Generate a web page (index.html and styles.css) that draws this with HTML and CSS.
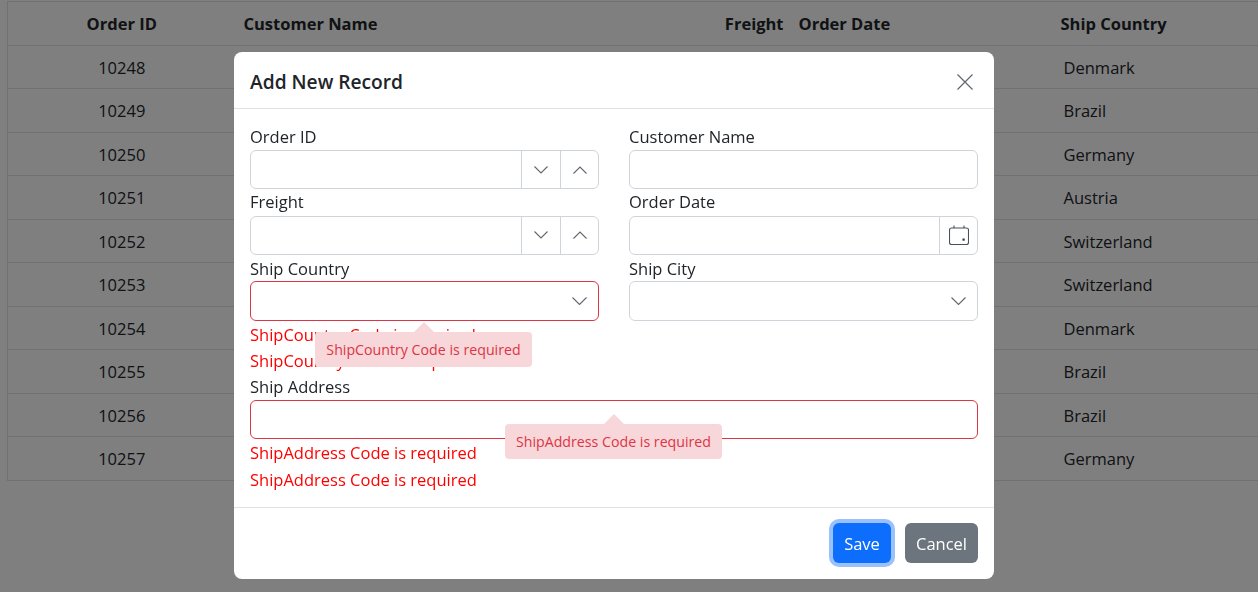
FILE: index.html
```html
<!DOCTYPE html>
<html lang="en">
<head>
    <meta charset="UTF-8">
    <meta name="viewport" content="width=device-width, initial-scale=1.0">
    <title>Add New Record</title>
    <link rel="stylesheet" href="styles.css">
</head>
<body>
    <table class="grid">
        <colgroup>
            <col class="col-id">
            <col class="col-name">
            <col class="col-freight">
            <col class="col-date">
            <col>
        </colgroup>
        <thead>
            <tr>
                <th class="center">Order ID</th>
                <th>Customer Name</th>
                <th class="right">Freight</th>
                <th>Order Date</th>
                <th>Ship Country</th>
            </tr>
        </thead>
        <tbody>
            <tr><td class="center">10248</td><td></td><td></td><td></td><td class="country">Denmark</td></tr>
            <tr><td class="center">10249</td><td></td><td></td><td></td><td class="country">Brazil</td></tr>
            <tr><td class="center">10250</td><td></td><td></td><td></td><td class="country">Germany</td></tr>
            <tr><td class="center">10251</td><td></td><td></td><td></td><td class="country">Austria</td></tr>
            <tr><td class="center">10252</td><td></td><td></td><td></td><td class="country">Switzerland</td></tr>
            <tr><td class="center">10253</td><td></td><td></td><td></td><td class="country">Switzerland</td></tr>
            <tr><td class="center">10254</td><td></td><td></td><td></td><td class="country">Denmark</td></tr>
            <tr><td class="center">10255</td><td></td><td></td><td></td><td class="country">Brazil</td></tr>
            <tr><td class="center">10256</td><td></td><td></td><td></td><td class="country">Brazil</td></tr>
            <tr><td class="center">10257</td><td></td><td></td><td></td><td class="country">Germany</td></tr>
        </tbody>
    </table>

    <div class="backdrop">
        <div class="modal">
            <div class="modal-header">
                <h2>Add New Record</h2>
                <button class="close" aria-label="Close">
                    <svg width="16" height="16" viewBox="0 0 16 16"><path d="M0.5 0.5L15.5 15.5M15.5 0.5L0.5 15.5" stroke="#5f666d" stroke-width="1.2" fill="none"/></svg>
                </button>
            </div>
            <div class="modal-body">
                <div class="form-row">
                    <div class="field">
                        <label>Order ID</label>
                        <div class="control">
                            <input type="text">
                            <span class="addon"><svg width="14" height="8" viewBox="0 0 14 8"><path d="M0.5 0.5L7 7L13.5 0.5" class="ico"/></svg></span>
                            <span class="addon"><svg width="14" height="8" viewBox="0 0 14 8"><path d="M0.5 7.5L7 1L13.5 7.5" class="ico"/></svg></span>
                        </div>
                    </div>
                    <div class="field">
                        <label>Customer Name</label>
                        <div class="control"><input type="text"></div>
                    </div>
                </div>
                <div class="form-row">
                    <div class="field">
                        <label>Freight</label>
                        <div class="control">
                            <input type="text">
                            <span class="addon"><svg width="14" height="8" viewBox="0 0 14 8"><path d="M0.5 0.5L7 7L13.5 0.5" class="ico"/></svg></span>
                            <span class="addon"><svg width="14" height="8" viewBox="0 0 14 8"><path d="M0.5 7.5L7 1L13.5 7.5" class="ico"/></svg></span>
                        </div>
                    </div>
                    <div class="field">
                        <label>Order Date</label>
                        <div class="control">
                            <input type="text">
                            <span class="addon date"><svg width="20" height="20" viewBox="0 0 20 20"><path d="M5 0.5V3M15 0.5V3M2.5 3H17.5Q19.5 3 19.5 5V17.5Q19.5 19.5 17.5 19.5H2.5Q0.5 19.5 0.5 17.5V5Q0.5 3 2.5 3Z" class="cal"/><rect x="13.5" y="13.5" width="2.2" height="2.2" fill="#343a40"/></svg></span>
                        </div>
                    </div>
                </div>
                <div class="form-row row-ship">
                    <div class="field">
                        <label>Ship Country</label>
                        <div class="control select invalid">
                            <input type="text">
                            <span class="caret"><svg width="15" height="8" viewBox="0 0 15 8"><path d="M0.5 0.5L7.5 7.5L14.5 0.5" class="ico"/></svg></span>
                        </div>
                        <div class="error">ShipCountry Code is required</div>
                        <div class="error">ShipCountry Code is required</div>
                        <div class="tip tip-country">ShipCountry Code is required</div>
                    </div>
                    <div class="field">
                        <label>Ship City</label>
                        <div class="control select">
                            <input type="text">
                            <span class="caret"><svg width="15" height="8" viewBox="0 0 15 8"><path d="M0.5 0.5L7.5 7.5L14.5 0.5" class="ico"/></svg></span>
                        </div>
                    </div>
                </div>
                <div class="field">
                    <label>Ship Address</label>
                    <div class="control invalid"><input type="text"></div>
                    <div class="error">ShipAddress Code is required</div>
                    <div class="error">ShipAddress Code is required</div>
                    <div class="tip tip-address">ShipAddress Code is required</div>
                </div>
            </div>
            <div class="modal-footer">
                <button class="btn btn-save">Save</button>
                <button class="btn btn-cancel">Cancel</button>
            </div>
        </div>
    </div>
</body>
</html>
```

FILE: styles.css
```css
body{
    margin: 0;
    padding: 1px 0 0 7px;
    height: 592px;
    overflow: hidden;
    box-sizing: border-box;
    font-family: "Open Sans", "Liberation Sans", sans-serif;
    font-size: 16.5px;
    color: #212529;
    background-color: #fff;
}

/* grid behind the dialog */
.grid{
    border-collapse: collapse;
    width: 1251px;
    table-layout: fixed;
    border-left: 1px solid #dee2e6;
}
.grid th, .grid td{
    border-top: 1px solid #dee2e6;
    border-bottom: 1px solid #dee2e6;
    padding: 0 8px;
    text-align: left;
}
.grid th{
    height: 42.5px;
    font-weight: 700;
}
.grid td{
    height: 41.5px;
    padding-top: 1px;
}
.col-id{ width: 228px; }
.col-name{ width: 408px; }
.col-freight{ width: 147px; }
.col-date{ width: 262px; }
.grid .center{ text-align: center; }
.grid .right{ text-align: right; padding-right: 7px; }
.grid .country{ padding-left: 11px; }

/* dialog */
.backdrop{
    position: fixed;
    top: 0;
    left: 0;
    right: 0;
    bottom: 0;
    background-color: rgba(0,0,0,0.5);
}
.modal{
    position: absolute;
    left: 234px;
    top: 52px;
    width: 760px;
    height: 527px;
    display: flex;
    flex-direction: column;
    background-color: #fff;
    border-radius: 8px;
}
.modal-header{
    height: 57px;
    flex-shrink: 0;
    box-sizing: border-box;
    display: flex;
    align-items: center;
    justify-content: space-between;
    padding: 2px 21px 0 16px;
    border-bottom: 1px solid #dee2e6;
}
.modal-header h2{
    margin: 0;
    font-size: 19.2px;
    font-weight: 600;
}
.close{
    display: flex;
    margin-top: 1px;
    padding: 0;
    background: none;
    border: none;
}
.modal-body{
    flex: 1;
    padding: 14.5px 16px 0;
}
.form-row{
    display: grid;
    grid-template-columns: 349px 349px;
    column-gap: 30px;
}
.field{
    position: relative;
}
.field label{
    display: block;
    height: 26.5px;
    line-height: 26px;
}
.row-ship label{
    height: 26px;
    line-height: 27px;
}
.control{
    display: flex;
    height: 39.25px;
    box-sizing: border-box;
    border: 1px solid #ced4da;
    border-radius: 6px;
    background-color: #fff;
}
.control input{
    flex: 1;
    min-width: 0;
    padding: 0 12px;
    border: none;
    background: none;
    outline: none;
}
.select{
    height: 40px;
}
.invalid{
    border-color: #dc3545;
}
.addon{
    width: 38px;
    display: flex;
    align-items: center;
    justify-content: center;
    border-left: 1px solid #ced4da;
}
.addon:last-child{
    width: 37px;
}
.caret{
    width: 38px;
    display: flex;
    align-items: center;
    justify-content: center;
}
.ico{
    fill: none;
    stroke: #5f666d;
    stroke-width: 1.1;
}
.cal{
    fill: none;
    stroke: #495057;
    stroke-width: 1.1;
}
.error{
    height: 26.25px;
    line-height: 27.5px;
    color: #f00;
}

/* validation tooltips */
.tip{
    position: absolute;
    width: 217px;
    height: 35px;
    box-sizing: border-box;
    line-height: 35px;
    text-align: center;
    font-size: 14.2px;
    color: #dc3545;
    background-color: #f8d7da;
    border-radius: 4px;
}
.tip::before{
    content: "";
    position: absolute;
    top: -10px;
    left: 50%;
    margin-left: -10px;
    border-left: 10px solid transparent;
    border-right: 10px solid transparent;
    border-bottom: 10px solid #f8d7da;
}
.tip-country{
    left: 65px;
    top: 77px;
}
.tip-address{
    left: 255px;
    top: 50px;
}

.modal-footer{
    height: 72px;
    flex-shrink: 0;
    box-sizing: border-box;
    display: flex;
    align-items: center;
    justify-content: flex-end;
    gap: 14px;
    padding: 0 16px 1px;
    border-top: 1px solid #dee2e6;
}
.btn{
    height: 40px;
    padding: 0;
    font-family: inherit;
    font-size: 16.5px;
    color: #fff;
    border: none;
    border-radius: 6px;
}
.btn-save{
    width: 58px;
    background-color: #0d6efd;
    box-shadow: 0 0 0 4px #98c1fd;
}
.btn-cancel{
    width: 73px;
    background-color: #6c757d;
}
```
